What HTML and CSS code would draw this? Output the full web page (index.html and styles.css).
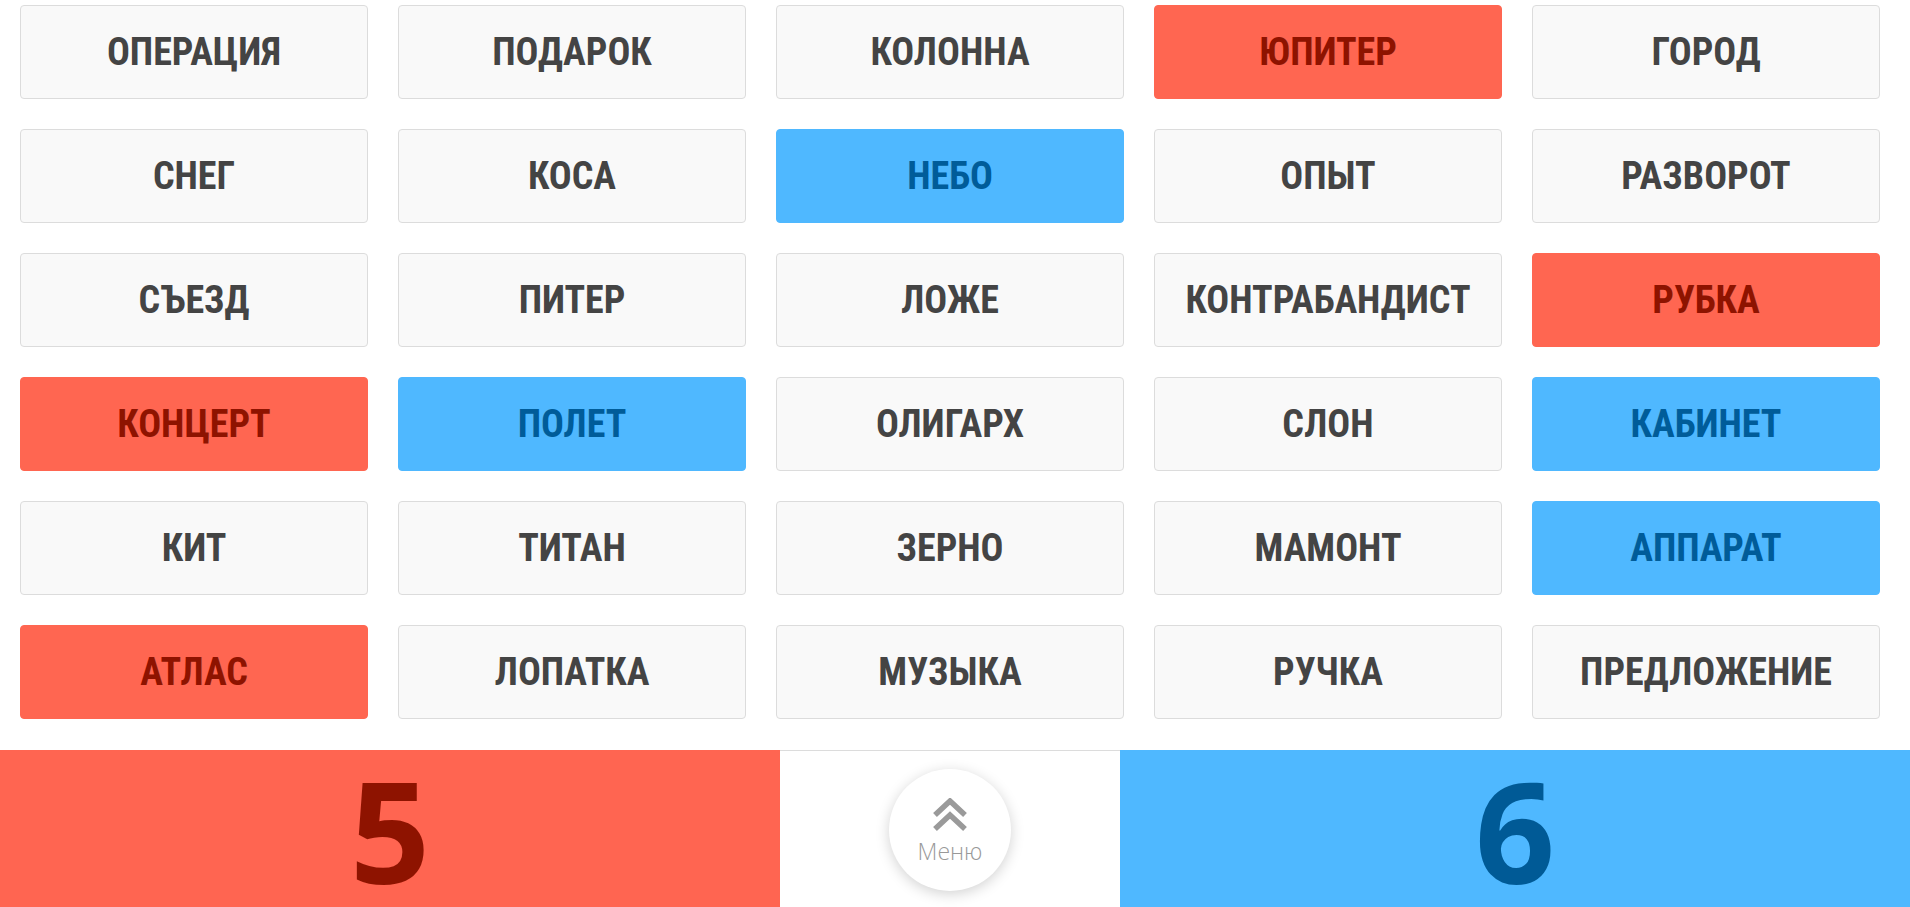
FILE: index.html
```html
<!DOCTYPE html>
<html lang="ru">
<head>
<meta charset="utf-8">
<title>Игра</title>
<link rel="stylesheet" href="styles.css">
</head>
<body>
<main class="board">
  <div class="card">ОПЕРАЦИЯ</div>
  <div class="card">ПОДАРОК</div>
  <div class="card">КОЛОННА</div>
  <div class="card red">ЮПИТЕР</div>
  <div class="card">ГОРОД</div>

  <div class="card">СНЕГ</div>
  <div class="card">КОСА</div>
  <div class="card blue">НЕБО</div>
  <div class="card">ОПЫТ</div>
  <div class="card">РАЗВОРОТ</div>

  <div class="card">СЪЕЗД</div>
  <div class="card">ПИТЕР</div>
  <div class="card">ЛОЖЕ</div>
  <div class="card">КОНТРАБАНДИСТ</div>
  <div class="card red">РУБКА</div>

  <div class="card red">КОНЦЕРТ</div>
  <div class="card blue">ПОЛЕТ</div>
  <div class="card">ОЛИГАРХ</div>
  <div class="card">СЛОН</div>
  <div class="card blue">КАБИНЕТ</div>

  <div class="card">КИТ</div>
  <div class="card">ТИТАН</div>
  <div class="card">ЗЕРНО</div>
  <div class="card">МАМОНТ</div>
  <div class="card blue">АППАРАТ</div>

  <div class="card red">АТЛАС</div>
  <div class="card">ЛОПАТКА</div>
  <div class="card">МУЗЫКА</div>
  <div class="card">РУЧКА</div>
  <div class="card">ПРЕДЛОЖЕНИЕ</div>
</main>
<footer class="score">
  <div class="team team-red"><span class="num">5</span></div>
  <div class="middle">
    <button class="menu-btn" type="button">
      <svg class="chev" width="36" height="34" viewBox="0 0 36 34">
        <polyline points="3,17 18,3 33,17" fill="none" stroke="#9a9a9a" stroke-width="5.5"/>
        <polyline points="3,31 18,17 33,31" fill="none" stroke="#9a9a9a" stroke-width="5.5"/>
      </svg>
      <span class="menu-label">Меню</span>
    </button>
  </div>
  <div class="team team-blue"><span class="num">6</span></div>
</footer>
</body>
</html>
```
FILE: styles.css
```css
html, body {
  margin: 0;
  padding: 0;
  background: #fff;
}
body {
  width: 1910px;
  height: 907px;
  overflow: hidden;
  font-family: Roboto, "Liberation Sans", sans-serif;
}
.board {
  display: grid;
  grid-template-columns: repeat(5, 1fr);
  grid-auto-rows: 94px;
  gap: 30px;
  padding: 5px 30px 31px 20px;
}
.card {
  display: flex;
  align-items: center;
  justify-content: center;
  background: #f9f9f9;
  border: 1px solid #dcdcdc;
  border-radius: 4px;
  font-family: Roboto, "Liberation Sans", sans-serif;
  font-weight: 700;
  font-stretch: 75%;
  font-size: 38px;
  color: #444;
  box-sizing: border-box;
}
.card.red {
  background: #ff6651;
  border-color: #ff6651;
  color: #8e1300;
}
.card.blue {
  background: #4fb8ff;
  border-color: #4fb8ff;
  color: #005c99;
}
.score {
  display: flex;
  height: 157px;
}
.team {
  display: flex;
  align-items: center;
  justify-content: center;
}
.num {
  font-family: "Open Sans", sans-serif;
  font-weight: 700;
  font-size: 140px;
  line-height: 140px;
  display: block;
  height: 140px;
  padding-top: 2px;
}
.team-red {
  width: 780px;
  background: #ff6551;
  color: #8e1300;
}
.team-blue {
  flex: 1;
  background: #4fb8ff;
  color: #005a96;
}
.middle {
  width: 340px;
  border-top: 1px solid #dcdcdc;
  box-sizing: border-box;
  display: flex;
  align-items: center;
  justify-content: center;
}
.menu-btn {
  width: 122px;
  height: 122px;
  border-radius: 50%;
  border: none;
  background: #fff;
  box-shadow: 0 3px 14px rgba(0, 0, 0, 0.18);
  display: flex;
  flex-direction: column;
  align-items: center;
  justify-content: center;
  padding: 0;
  margin-top: 2px;
}
.chev {
  display: block;
  margin-top: 0;
}
.menu-label {
  font-family: "Open Sans", sans-serif;
  font-weight: 300;
  font-size: 23px;
  color: #999;
  line-height: 1;
  margin-top: 8px;
}
```
